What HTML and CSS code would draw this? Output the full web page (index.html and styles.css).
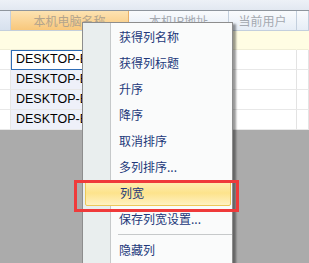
FILE: index.html
```html
<!DOCTYPE html>
<html lang="zh-CN">
<head>
    <meta charset="UTF-8">
    <title>列菜单</title>
    <link rel="stylesheet" href="styles.css">
</head>
<body>
<div class="screen">
    <div class="top-strip"></div>
    <div class="row head">
        <div class="cell ind"></div>
        <div class="cell hot">本机电脑名称</div>
        <div class="cell">本机IP地址</div>
        <div class="cell">当前用户</div>
        <div class="cell"></div>
    </div>
    <div class="row filter">
        <div class="cell ind"></div>
        <div class="cell"></div>
        <div class="cell"></div>
        <div class="cell"></div>
        <div class="cell"></div>
    </div>
    <div class="row data">
        <div class="cell ind"></div>
        <div class="cell name focus">DESKTOP-E</div>
        <div class="cell"></div>
        <div class="cell"></div>
        <div class="cell"></div>
    </div>
    <div class="row data">
        <div class="cell ind"></div>
        <div class="cell name">DESKTOP-E</div>
        <div class="cell"></div>
        <div class="cell"></div>
        <div class="cell"></div>
    </div>
    <div class="row data">
        <div class="cell ind"></div>
        <div class="cell name">DESKTOP-E</div>
        <div class="cell"></div>
        <div class="cell"></div>
        <div class="cell"></div>
    </div>
    <div class="row data">
        <div class="cell ind"></div>
        <div class="cell name">DESKTOP-E</div>
        <div class="cell"></div>
        <div class="cell"></div>
        <div class="cell"></div>
    </div>
    <div class="empty"></div>

    <!-- context menu over the grid -->
    <ul class="menu">
        <li>获得列名称</li>
        <li>获得列标题</li>
        <li>升序</li>
        <li>降序</li>
        <li>取消排序</li>
        <li>多列排序...</li>
        <li class="active">列宽</li>
        <li>保存列宽设置...</li>
        <li class="sep"></li>
        <li>隐藏列</li>
    </ul>

    <!-- red annotation box -->
    <div class="mark"></div>
</div>
</body>
</html>
```

FILE: styles.css
```css
body {
    margin: 0;
    padding: 0;
    background-color: #ababab;
    font-family: "Noto Sans CJK SC", "Liberation Sans", sans-serif;
}

.screen {
    position: relative;
    width: 309px;
    height: 263px;
    overflow: hidden;
    background-color: #ababab;
}

.top-strip {
    height: 10px;
    background: linear-gradient(#edf1f7, #e2e8f1);
    border-bottom: 1px solid #8e959d;
}

.row {
    display: grid;
    grid-template-columns: 11px 118px 100px 68px 1fr;
    height: 20px;
}

.cell {
    box-sizing: border-box;
    border-right: 1px solid #e3e3e3;
    border-bottom: 1px solid #e8e8e8;
    background: #fff;
    font-size: 12px;
    line-height: 19px;
    white-space: nowrap;
    overflow: hidden;
}

.head .cell {
    background: linear-gradient(#f9fbfd, #e6edf6);
    border-right-color: #c3cfdd;
    border-bottom-color: #c3cfdd;
    color: #a4a9b0;
    text-align: center;
}

.head .cell.ind {
    background: linear-gradient(#e8eef7, #d7e1ee);
}

.head .cell.hot {
    background: linear-gradient(#fde3b2, #f8c77b);
    border-right-color: #e9b068;
    color: #b3a48c;
}

.filter {
    height: 19px;
}

.filter .cell {
    background: #fffde3;
    border-right-color: #fffde3;
    border-bottom-color: #f0eed6;
}

.data .cell.ind {
    background: #fff;
    border-right-color: #e6e6e6;
}

.data .cell.name {
    background: #eef0f9;
    color: #000;
    font-family: "Liberation Sans", sans-serif;
    font-size: 12.5px;
    padding-left: 5px;
    border-right: 0;
}

.data .cell.focus {
    background: #fff;
    border: 1px solid #2f6db5;
    padding-left: 4px;
    line-height: 17px;
}

.empty {
    height: 133px;
    background: #ababab;
}

.menu {
    position: absolute;
    left: 82px;
    top: 22px;
    width: 151px;
    height: 260px;
    margin: 0;
    padding: 1px 0 0 0;
    list-style: none;
    box-sizing: border-box;
    border: 1px solid #8d8d8d;
    background: linear-gradient(to right, #e9eeee 0, #e9eeee 27px, #c6c9ca 27px, #c6c9ca 28px, #fafbfb 28px);
    box-shadow: 3px 2px 2px rgba(0, 0, 0, 0.4);
}

.menu li {
    height: 26px;
    line-height: 26px;
    padding-left: 36px;
    font-size: 12px;
    color: #22387a;
    box-sizing: border-box;
}

.menu li.active {
    margin: 0 1px 0 2px;
    padding-left: 34px;
    border: 1px solid #ecc859;
    border-radius: 2px;
    line-height: 24px;
    background: linear-gradient(#fff0b6, #fde38c 50%, #fff1c2);
}

.menu li.sep {
    height: 2px;
    margin: 0 0 2px 35px;
    padding: 0;
    border-bottom: 1px solid #c6c9ca;
    box-sizing: content-box;
}

.mark {
    position: absolute;
    left: 74px;
    top: 180px;
    width: 165px;
    height: 32px;
    box-sizing: border-box;
    border: 3px solid #ef3a3a;
}
```
